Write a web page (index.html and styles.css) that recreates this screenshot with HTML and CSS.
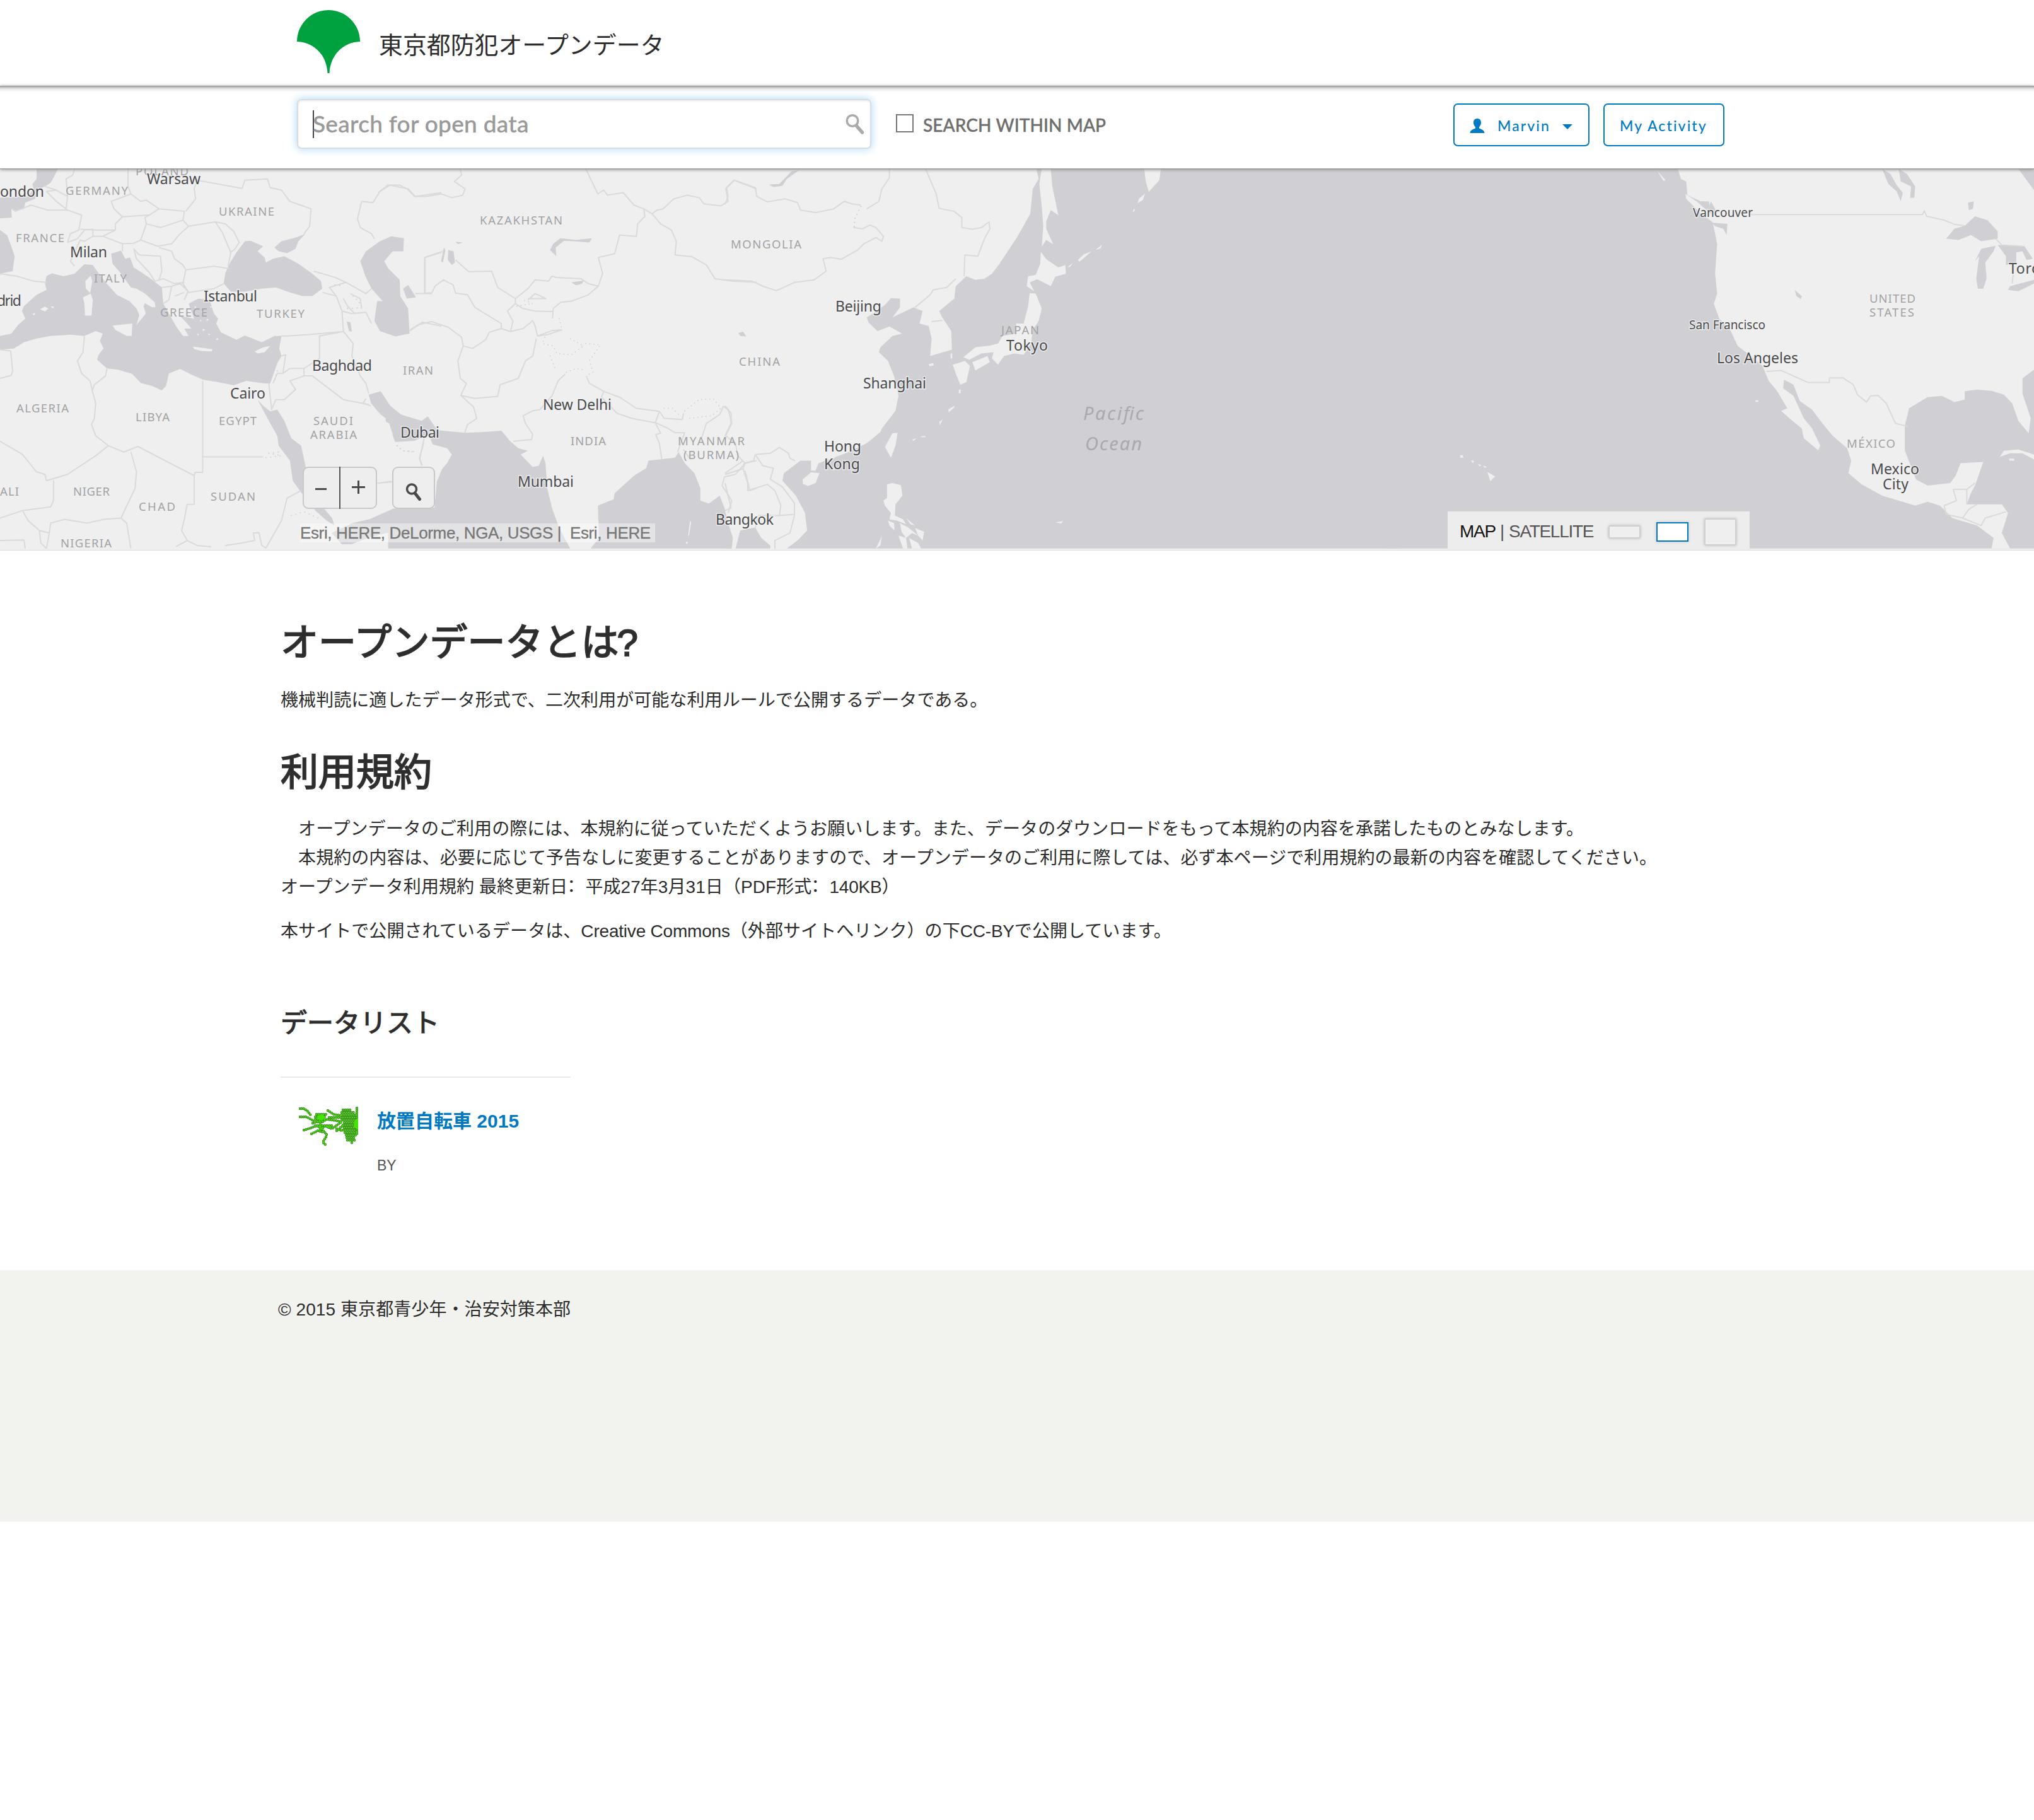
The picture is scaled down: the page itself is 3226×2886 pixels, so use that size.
FILE: index.html
```html
<!DOCTYPE html>
<html lang="ja">
<head>
<meta charset="utf-8">
<title>東京都防犯オープンデータ</title>
<link rel="stylesheet" href="styles.css">
</head>
<body>
<header class="brand">
  <svg class="brand-logo" viewBox="0 0 100 100"><path d="M0 50A50 50 0 0 1 100 50C72 51 53 72 51.500 100H48.500C47 72 28 51 0 50Z"/></svg>
  <span class="brand-name">東京都防犯オープンデータ</span>
</header>
<div class="toolbar">
  <div class="search">
    <span class="caret"></span><span class="placeholder">Search for open data</span>
    <svg class="search-icon" viewBox="0 0 30 34"><circle cx="11" cy="11.500" r="8.800"/><path class="handle" d="M17 19L26.500 30"/></svg>
  </div>
  <span class="checkbox"></span>
  <span class="within">SEARCH WITHIN MAP</span>
  <div class="actions">
    <a class="btn btn-user">
      <svg class="user-icon" viewBox="0 0 24 23"><path d="M12 0c4 0 6 2.800 6 6.200 0 3-1.300 5.600-3 7v2.300c3 1.500 8 2.200 8.500 7.500H.5C1 17.700 6 17 9 15.500v-2.300c-1.700-1.400-3-4-3-7C6 2.800 8 0 12 0z"/></svg>
      <span class="user-name">Marvin</span><span class="arrow"></span>
    </a>
    <a class="btn btn-activity">My Activity</a>
  </div>
</div>
<section class="map">
<svg class="map-canvas" viewBox="0 268 3226 602" preserveAspectRatio="none">
  <!-- Europe, North Africa, Middle East -->
  <g transform="translate(0 260) scale(.44643 .39541)">
    <g class="sea">
      <path d="M130 20L205 20 195 45 180 75 160 90 128 105 125 140 90 155 85 180 55 187 40 180 42 215 0 218V135L100 130 120 100 115 80 130 60Z"/>
      <path d="M0 265L25 285 40 330 52 370 45 430 0 440Z"/>
      <path d="M0 690L40 680 65 645 90 620 78 590 85 570 130 525 165 505 160 480 165 450 185 438 225 450 265 440 300 402 330 405 345 430 375 475 415 525 460 550 485 580 495 605 485 645 500 625 518 600 510 570 515 558 540 575 552 575 550 555 515 520 485 500 465 495 430 440 400 400 395 360 430 348 445 380 462 375 475 415 530 455 575 495 580 560 600 600 625 650 650 690 670 690 655 660 680 660 665 640 640 610 690 620 670 560 705 540 745 545 760 600 775 620 768 640 785 675 840 705 870 688 930 715 975 690 1000 690 992 740 1000 770 985 800 960 880 940 880 875 870 830 888 775 875 720 865 680 845 640 822 600 840 590 890 575 908 540 890 500 878 470 842 420 825 380 820 345 785 350 765 368 740 355 710 365 680 340 670 300 690 250 685 180 690 130 700 85 715 50 740 0 745Z"/>
      <path d="M815 400L840 355 870 310 890 308 935 330 915 350 940 375 945 395 970 380 1010 370 1060 400 1110 440 1140 470 1145 500 1110 530 1075 530 1030 515 980 495 930 500 870 512 820 512 795 480 800 440Z"/>
      <path d="M975 335L1000 310 1050 295 1085 280 1060 310 1050 340 1020 358 990 350Z"/>
      <path d="M1280 390L1300 350 1350 310 1390 290 1435 298 1433 350 1395 350 1365 390 1380 420 1420 465 1422 530 1450 580 1455 680 1405 692 1350 670 1330 630 1340 550 1360 550 1320 500 1298 450Z"/>
      <path d="M1432 500L1450 485 1478 535 1445 540Z"/>
      <path d="M915 945L935 970 960 992 985 985 1010 1030 1035 1100 1070 1130 1085 1210 1120 1340 1180 1420 1188 1450 1160 1430 1120 1390 1065 1310 1040 1270 1030 1190 990 1130 985 1090 960 1040Z"/>
      <path d="M1232 632L1245 635 1250 672 1240 670Z"/>
    </g>
    <g class="land">
      <path d="M322 448L328 470 320 518 305 500 303 470Z"/><path d="M295 535L322 520 330 545 325 608 302 608 300 560Z"/>
      <path d="M400 648L470 640 468 690 450 690 410 665Z"/><path d="M685 733L705 735 755 743 752 752 715 750 690 742Z"/>
      <path d="M905 752L935 735 960 730 940 755 915 760Z"/><path d="M142 582L160 572 172 580 160 592ZM180 570L192 572 188 580ZM115 600L125 598 122 608Z"/>
      <path d="M690 570l8 3-5 6zM715 590l10 4-8 5zM735 620l8 5-10 4zM720 660l9 5-8 6zM700 680l8 3-5 5zM765 705l10 -8 0 8zM745 570l8 2-4 6zM710 625l7 2-5 5zM740 680l8 3-7 4z"/>
    </g>
    <g class="line">
      <path d="M42 180L55 190 110 165 170 185 240 185 290 205 280 265 250 280 240 315"/><path d="M160 90L200 105 240 130 235 180M200 105L165 110 200 150 240 185M265 20L258 45 235 60 240 130"/>
      <path d="M455 20L455 90 465 120 395 150 405 180 435 212 410 240 410 265 340 265 285 262M465 120L500 150 520 145 565 180 530 205 435 212M565 180L655 190 650 225 570 255 520 240 515 215 530 205"/>
      <path d="M700 65L860 98 870 65 950 60 960 95 1000 105 1030 150 1105 180 1100 250 1080 280M700 65L690 100 695 140 660 190M650 225L670 250 765 232 790 275 820 355 835 340 850 315 830 270 800 240 765 232M520 240L500 305 560 330 610 320 640 280 670 250M820 355L810 410"/>
      <path d="M240 315L275 300 300 265 330 262 330 290 300 310 285 305 250 390 265 410M330 290L365 290 410 265M365 290L400 305 435 320 475 318 500 305M435 320L435 350"/>
      <path d="M475 340L495 365 570 370 575 430 565 465M475 340L485 380 530 435 550 470 580 460M565 335L610 350 620 380 650 405 660 425 760 410 815 420M660 425L650 480 670 515 760 500 795 480M580 460L620 480 655 475M575 495L610 490 640 480 668 510 655 545M610 490L600 545 580 560M655 515L620 530"/>
      <path d="M0 440L60 450 120 470 165 475M0 445V440"/>
      <path d="M300 690L295 755 275 790 290 840 320 870 328 910 340 960 335 1020 325 1045 340 1090 385 1130 340 1170 240 1245 165 1270 160 1245 130 1235 80 1165 0 1112M380 820L375 850 335 885 328 910M385 1130L440 1155 490 1133 690 1250 693 1237 720 1237V870M720 1175H935M690 1250V1365H665L655 1425 645 1470 665 1510 625 1535M465 1155L485 1235 480 1300 430 1420 450 1440 465 1542M190 1268V1350L180 1375 80 1390 0 1420M80 1390L100 1430 140 1470 175 1480 180 1440 230 1425 310 1440 370 1425 430 1420M140 1470L145 1520 165 1542M175 1480L165 1542M0 1510L85 1508 90 1542M665 1510L700 1530 750 1535M800 1530L860 1520 905 1510 900 1480 920 1478 930 1530 945 1540 1000 1430 1020 1340 1070 1310"/>
      <path d="M38 750L45 830 40 848 0 860M38 750L0 745M955 880L965 985 980 945 1010 945 1050 905 1030 870 1080 850 1110 850 1220 945 1310 965M970 880L985 840 1005 840 1030 820 1080 820 1135 780V690L1220 672M1000 770L1015 765 1005 840M1000 690L1020 690 1090 685 1220 672 1215 590 1195 530 1145 515M1080 820V850M1195 530L1170 495 1230 475 1300 520 1320 500M1115 430L1190 455 1230 475M1215 590L1250 600 1300 595 1320 640M1220 672L1255 720 1250 770 1280 850 1300 880 1310 920M1220 540L1235 570 1260 600M1245 520L1280 540 1285 580"/>
      <path d="M1330 300L1320 280 1280 255 1270 220 1285 150 1325 155 1350 110 1385 85 1450 100 1475 130 1568 115M1510 515V375L1568 355M1475 520H1535M1455 670L1500 635 1568 650"/>
      <path d="M1500 1210L1490 1180 1505 1120M1340 1280L1395 1275M1300 940L1290 960 1318 970"/>
    </g>
    <g class="dots"><path d="M945 1178L1000 1170 955 1160 990 1155M1190 485L1220 490M1235 580L1285 575M1255 530L1280 560M1035 1410L1080 1395 1130 1420M1410 1130L1430 1150 1485 1155M985 830L975 870"/></g>
  </g>
  <!-- Central and South Asia -->
  <g transform="translate(600 260) scale(.38265 .39541)">
    <g class="sea">
      <path d="M-40 925L10 912 50 970 95 1005 180 1030 205 1012 225 1040 245 1068 360 1078 440 1075 510 1070 545 1110 580 1140 620 1150 590 1165 640 1215 665 1210 683 1170 693 1200 700 1300 720 1380 750 1460 795 1542H41V1479L-30 1495-110 1525-151 1525-194 1480-109 1441-34 1424 62 1382 233 1378 243 1273 265 1222 285 1200 305 1165 285 1140 225 1125 210 1085 150 1110 70 1115 60 1090 50 1060 35 1060 30 1020 5 1000-30 960Z"/>
      <path d="M880 1542L915 1500 910 1370 975 1345 980 1320 1060 1250 1110 1220 1120 1190 1230 1178 1245 1155 1270 1200 1310 1240 1335 1300 1335 1350 1370 1362 1415 1330 1435 1380 1450 1440 1470 1500 1465 1542Z"/>
      <path d="M272 335L278 345 268 395 260 390ZM290 345L312 350 318 395 305 405 288 385ZM320 312L350 315 330 322Z"/>
      <path d="M712 345L725 320 755 298 820 305 885 298 875 315 810 310 770 308 735 335 738 370Z"/>
      <path d="M800 475L850 468 845 480 820 487Z"/><path d="M1492 678L1510 675 1525 690 1500 690Z"/>
    </g>
    <path class="land" d="M1292 1432L1297 1436 1288 1490 1284 1490ZM1276 1515h6v8h-6zM22 1030L45 1040 60 1085 45 1105 30 1085Z"/>
    <g class="line">
      <path d="M340 20L345 45 315 70 360 100 350 125 305 135 260 120 200 130 150 130 120 100 90 85 40 85 0 115M860 20L910 120 935 105 950 125 1015 115 1060 165 1100 180 1135 200 1155 185 1180 180 1225 140 1280 125 1330 135 1350 160 1420 168 1450 150 1440 100 1475 65 1568 100M1135 200L1170 240 1215 265 1235 310 1230 365 1300 372 1360 405 1395 460 1470 470 1568 475"/>
      <path d="M1100 180L1105 210 1075 240 1070 290 1000 285 980 360 912 375 930 440 912 490 870 480 840 460 740 455 720 450 705 470 650 465 620 500 568 540 495 495 470 430 375 432 320 385M268 350L192 375V517H222L235 490 270 465 310 485 320 518 370 525 400 575 510 640V660L548 672 600 660 640 628 650 650 660 690 700 685 760 665 720 668 660 690M912 490L870 525 800 550 755 555 725 580 722 620M722 592L650 590 600 580 568 560 568 540M568 560L535 590 558 630 548 672M510 660L460 675 445 705 390 740 352 730 345 695 290 655 220 632 165 645 132 665M620 540L695 540 650 520 620 545"/>
      <path d="M352 730L330 790 340 860 365 880 342 928 400 940 495 932 505 885 580 860 610 790 640 770 655 700M342 928L395 975 408 1020 370 1045 358 1078M560 1112L635 1105 640 1085 610 1040 600 1010 640 990 670 985 720 930 745 870 775 842M862 850L875 880 935 912 1000 935 1070 980 1165 992 1148 1038 1050 1020 990 1000 925 935 935 912M1165 992L1185 1020 1260 1025 1265 1000M1148 1038L1170 1080 1150 1085 1165 1120 1175 1185M1150 1038L1200 1060 1230 1078 1270 1078 1240 1155M1265 1145L1290 1180M1340 1100L1360 1040 1415 1005 1430 972 1450 985 1465 1040 1440 1090 1480 1120 1490 1170 1520 1200 1568 1190M1520 1200L1480 1245 1435 1255 1425 1290 1465 1350 1450 1400M1520 1230L1540 1310 1568 1300M180 1210L172 1180 190 1100M0 1280L55 1272"/>
    </g>
    <g class="dots"><path d="M750 620L760 660M690 695L680 720 725 730 740 760 800 765 850 730 785 695M712 770L725 800 735 825M860 720L920 725 875 790 890 835 860 850M780 835L820 820 850 825M1185 980L1220 980 1250 1010M1270 990L1330 945 1390 942 1420 980 1380 1010 1290 1020M80 1130L100 1150 155 1155M575 570L640 560 600 545"/></g>
  </g>
  <!-- East Asia and the western Pacific -->
  <g transform="translate(1150 260) scale(.47832 .39541)">
    <g class="sea">
      <path d="M1032 20L1040 60 1020 100 1012 200 970 290 910 400 885 440 860 460 830 465 800 450 765 490 760 540 710 590 720 615 750 670 752 745 680 770 685 700 675 650 645 640 655 590 625 575 590 595 555 615 580 575 580 540 550 538 530 565 490 600 470 615 475 635 505 670 545 652 587 680 555 690 515 735 510 755 540 790 560 850 570 900 575 930 565 990 520 1060 515 1075 470 1120 400 1160 310 1200 300 1230 285 1230 285 1190 250 1190 195 1240 190 1270 235 1330 265 1400 272 1470 240 1510 205 1542H2240V20Z"/>
      <path d="M35 1542L50 1470 100 1458 120 1500 150 1530V1542ZM0 1460L20 1500 18 1542H0Z"/>
      <path d="M145 82L180 80 220 30 245 25 205 60 190 88 160 92Z"/><path d="M45 678L60 673 70 692 52 690Z"/>
    </g>
    <g class="land">
      <path d="M1050 20H1080L1085 90 1105 205 1080 185 1065 230 1065 260 1088 322 1065 305 1050 332 1055 250 1050 170 1042 80Z"/>
      <path d="M1390 20H1445L1440 65 1405 112 1395 70Z"/><path d="M1393 118L1385 145 1368 157 1372 140ZM1355 180l5 2-6 12-2-4zM1170 385L1190 362 1215 350 1195 372 1175 392ZM1228 345L1250 324 1245 338ZM1135 415L1152 398 1145 412Z"/>
      <path d="M1047 352L1065 382 1105 415 1128 405 1130 440 1095 452 1080 490 1035 462 1010 475 1025 510 1000 490 1005 450 1030 445 1045 400Z"/>
      <path d="M1010 518L1030 520 1050 580 1040 630 1020 665 1015 720 990 765 960 760 925 770 905 805 885 780 890 755 850 760 810 785 790 775 830 735 880 728 905 720 920 690 965 680 965 640 990 640 1005 570Z"/>
      <path d="M755 805L795 790 812 810 800 875 780 885 765 840ZM820 795L870 770 878 795 830 828Z"/>
      <path d="M675 803L690 798 692 808 678 811ZM748 760h5v20h-5zM775 905h6v14h-6zM740 985l20-15v6l-18 20zM710 1035l12-12-10 25zM620 1105l15-5-10 10zM650 1092h15v4h-15z"/>
      <path d="M555 1080L572 1078 565 1130 550 1178 530 1135Z"/><path d="M257 1265L285 1237 313 1240 300 1280 275 1292 258 1283Z"/>
      <path d="M537 1285L555 1280 583 1288 588 1330 565 1365 563 1410 590 1425 600 1445 570 1430 545 1425 550 1400 530 1370 525 1350 537 1340Z"/>
      <path d="M540 1430L560 1440 562 1470 545 1450ZM600 1420L630 1450 615 1445ZM580 1440L610 1460 640 1490 620 1480 600 1500 585 1475ZM500 1542L520 1492 515 1530ZM575 1490L600 1500 605 1542H590ZM630 1460L660 1475 655 1510 640 1490ZM610 1500L640 1520 650 1542H620ZM1095 1438L1120 1432 1115 1442Z"/>
    </g>
    <g class="line">
      <path d="M0 160L10 130 5 95 30 65 100 95 105 130 140 152 200 140 240 155 250 185 300 195 360 180 395 150 420 160 450 165M545 20V55L520 100 510 150 470 180M665 20L700 120 710 178 760 190 785 215 785 255 820 262 850 255 875 232 878 260 860 300 838 370 795 365 793 450M0 465L90 470 125 490 170 508 230 475 295 465 335 430 325 380 350 375 385 382 440 345 460 320 500 295 520 310 525 290 500 255 480 245 455 260 425 255M765 460L735 495 690 505 680 525 630 575M685 632L720 627"/>
      <path d="M100 1165L150 1160 180 1137 210 1160 215 1180 232 1190M100 1165L125 1210 160 1220 150 1265 190 1295 230 1360 230 1410 215 1480 165 1510 165 1542M0 1245L60 1222 75 1280 75 1310 140 1285 165 1310 185 1370 180 1410 230 1405M60 1222L65 1200 95 1190 100 1165M0 1280L10 1330 20 1380 0 1390M180 1410L110 1410 100 1460M0 970L20 1000 20 1040 0 1090M60 1190L0 1240"/>
    </g>
    <path class="dots" d="M450 170L430 220 428 255M1350 190L1310 260 1285 300"/>
  </g>
  <!-- North and Central America -->
  <g transform="translate(2200 260) scale(.65434 .39541)">
    <path class="sea" d="M-5 20H1568V1542H-5Z"/>
    <g class="land">
      <path d="M705 20L712 60 725 70 728 125 760 150 780 150 790 240 800 320 795 440 800 520 792 560 805 620 830 660 850 730 870 755 910 810 925 870 945 910 970 980 955 990 975 1020 1005 1060 1010 1100 1045 1148 1050 1130 1030 1060 1010 1020 985 930 960 900 962 865 985 885 1000 950 1030 985 1055 1040 1080 1090 1115 1140 1125 1190 1118 1240 1150 1285 1200 1330 1280 1370 1310 1355 1340 1370 1370 1420 1430 1450 1470 1500 1465 1542H1510L1490 1480 1505 1400 1490 1365 1405 1365 1415 1320 1425 1290 1445 1195 1390 1200 1378 1250 1365 1280 1310 1290 1282 1265 1255 1150 1255 1050 1265 980 1310 935 1345 930 1375 955 1400 945 1400 912 1430 905 1465 910 1495 925 1515 960 1530 1030 1555 1080 1560 1020 1540 920 1540 860 1568 825V105L1530 20Z"/>
      <path d="M655 28L675 65 670 68ZM723 120L750 150 785 200 790 235 755 190 725 140Z"/>
      <path d="M1485 1175L1495 1150 1530 1145 1568 1165V1185L1540 1160 1510 1160ZM1508 1182h12v8h-12z"/>
      <path d="M177 1168h6l2 10h-8zM203 1188l8 4-3 8zM220 1203l8 4-3 6zM232 1210l10 4-5 5zM243 1235L262 1253 250 1272ZM893 948h7v6h-7z"/>
    </g>
    <g class="sea">
      <path d="M1200 20L1220 40 1235 85 1250 115 1245 150 1235 110 1215 80ZM1240 20L1260 40 1280 90 1278 135 1268 135 1270 90 1245 70ZM1408 155L1422 150 1420 180 1410 185ZM785 150L800 195 795 205 780 175ZM787 235L825 240 823 285 815 260 795 250Z"/>
      <path d="M1355 300L1375 260 1400 248 1425 210 1455 225 1480 270 1480 300 1440 310 1415 285 1385 305Z"/>
      <path d="M1425 390L1440 340 1475 328 1470 350 1450 395 1453 460 1445 500 1432 500 1428 460 1435 370ZM1480 325L1545 330 1565 380 1550 385 1540 350 1525 355 1525 400 1500 405 1500 370ZM1505 505L1510 490 1568 465V480L1530 510Z"/>
      <path d="M988 505L1005 530 1003 542 992 530Z"/>
    </g>
    <g class="line">
      <path d="M880 203H1298L1302 188 1308 210 1350 225 1375 242 1400 248M920 832L955 828 1020 876H1072V858H1105L1130 885 1140 925 1162 955 1172 930 1190 928 1210 960 1232 1040 1262 1053M1350 1370L1380 1350 1372 1305H1405V1365M1405 1305L1425 1280M1350 1370L1355 1405 1395 1420 1410 1385 1430 1365M1395 1420L1425 1440 1440 1450 1450 1420 1500 1395M1475 300L1490 325 1540 330M1520 410L1515 480"/>
    </g>
  </g>
  <g class="country">
    <text x="215" y="278" textLength="84">POLAND</text><text x="104" y="309" textLength="99">GERMANY</text><text x="25" y="384" textLength="77">FRANCE</text><text x="347" y="342" textLength="88">UKRAINE</text><text x="149" y="448" textLength="52">ITALY</text><text x="254" y="502" textLength="75">GREECE</text><text x="407" y="504" textLength="76">TURKEY</text><text x="639" y="594" textLength="48">IRAN</text><text x="26" y="654" textLength="83">ALGERIA</text><text x="215" y="668" textLength="54">LIBYA</text><text x="347" y="674" textLength="60">EGYPT</text><text x="497" y="674" textLength="63">SAUDI</text><text x="492" y="696" textLength="74">ARABIA</text><text x="0" y="786" textLength="30">ALI</text><text x="116" y="786" textLength="58">NIGER</text><text x="220" y="810" textLength="58">CHAD</text><text x="334" y="794" textLength="71">SUDAN</text><text x="96" y="868" textLength="81">NIGERIA</text>
    <text x="761" y="356" textLength="131">KAZAKHSTAN</text><text x="905" y="706" textLength="56">INDIA</text><text x="1075" y="706" textLength="106">MYANMAR</text><text x="1084" y="728" textLength="88">(BURMA)</text><text x="1159" y="394" textLength="112">MONGOLIA</text><text x="1172" y="580" textLength="65">CHINA</text><text x="1588" y="530" textLength="60">JAPAN</text>
    <text x="2965" y="480" textLength="73">UNITED</text><text x="2965" y="502" textLength="71">STATES</text><text x="2929" y="710" textLength="77">MÉXICO</text>
  </g>
  <g class="city">
    <text x="233" y="292" textLength="85">Warsaw</text><text x="0" y="312" textLength="70">ondon</text><text x="111" y="408" textLength="59">Milan</text><text x="-5" y="485" textLength="39">drid</text><text x="323" y="478" textLength="85">Istanbul</text><text x="495" y="588" textLength="95">Baghdad</text><text x="365" y="632" textLength="56">Cairo</text><text x="635" y="694" textLength="62">Dubai</text><text x="861" y="650" textLength="109">New Delhi</text><text x="821" y="772" textLength="89">Mumbai</text><text x="1135" y="832" textLength="92">Bangkok</text><text x="1325" y="494" textLength="73">Beijing</text><text x="1369" y="616" textLength="100">Shanghai</text><text x="1307" y="716" textLength="59">Hong</text><text x="1307" y="744" textLength="57">Kong</text><text x="1596" y="556" textLength="66">Tokyo</text><text x="2723" y="576" textLength="129">Los Angeles</text><text x="2967" y="752" textLength="77">Mexico</text><text x="2986" y="776" textLength="41">City</text><text x="3186" y="434" textLength="50">Toro</text>
  </g>
  <g class="city city-small"><text x="2685" y="344" textLength="95">Vancouver</text><text x="2679" y="522" textLength="121">San Francisco</text></g>
  <g class="ocean"><text x="1718" y="666" textLength="96">Pacific</text><text x="1721" y="714" textLength="90">Ocean</text></g>
</svg>
<div class="zoom-tools">
  <div class="zoom"><span class="zoom-btn minus"></span><span class="zoom-btn plus"></span></div>
  <div class="locate"><svg viewBox="0 0 26 30"><circle cx="10" cy="9.500" r="7.500"/><path class="handle" d="M15.500 16.500L22.500 25.500"/></svg></div>
</div>
<div class="attribution">Esri, HERE, DeLorme, NGA, USGS |&nbsp; Esri, HERE</div>
<div class="basemap"><span class="on">MAP</span><span class="bar">|</span><span class="off">SATELLITE</span><i class="size small"></i><i class="size medium"></i><i class="size large"></i></div>
</section>
<main class="content">
  <h1>オープンデータとは<span class="mark">?</span></h1>
  <p class="about">機械判読に適したデータ形式で、二次利用が可能な利用ルールで公開するデータである。</p>
  <h1 class="terms-title">利用規約</h1>
  <p class="terms">　オープンデータのご利用の際には、本規約に従っていただくようお願いします。また、データのダウンロードをもって本規約の内容を承諾したものとみなします。<br>　本規約の内容は、必要に応じて予告なしに変更することがありますので、オープンデータのご利用に際しては、必ず本ページで利用規約の最新の内容を確認してください。<br>オープンデータ利用規約 最終更新日<span class="colon">：</span>平成27年3月31日（PDF形式<span class="colon">：</span><span class="latin">140KB</span>）</p>
  <p class="license">本サイトで公開されているデータは、<span class="latin">Creative Commons</span>（外部サイトへリンク）の下<span class="latin">CC-BY</span>で公開しています。</p>
  <h2>データリスト</h2>
  <article class="dataset">
    <svg class="thumb" viewBox="0 0 94 62">
      <g class="rim"><path d="M0 3L8 3 14 7 20 15M0 16H12L25 23M46 6L55 12 68 14M48 17H68M8 37L18 34 28 30 36 34M20 43L30 38 38 40M44 44L36 35 42 30 52 35 62 28 68 24M38 23L45 20 60 22 68 24M60 38L66 33 70 30M43 48L38 56 43 61M60 35L68 38M22 26L34 22 34 42"/>
      <path d="M28 12H43M26 16H43M26 20H43M30 24H40M26 30H52M46 32H52M70 5H84M68 9H88M68 13H92M70 17H92M68 21H92M72 25H92M70 29H92M72 33H92M70 37H92M73 41H92M75 45H90M76 49H90M77 53H91M84 57H86M92 2V46"/></g>
      <g class="fill"><path d="M0 3L8 3 14 7 20 15M0 16H12L25 23M46 6L55 12 68 14M48 17H68M8 37L18 34 28 30 36 34M20 43L30 38 38 40M44 44L36 35 42 30 52 35 62 28 68 24M38 23L45 20 60 22 68 24M60 38L66 33 70 30M43 48L38 56 43 61M60 35L68 38M22 26L34 22 34 42"/>
      <path d="M28 12H43M26 16H43M26 20H43M30 24H40M26 30H52M46 32H52M70 5H84M68 9H88M68 13H92M70 17H92M68 21H92M72 25H92M70 29H92M72 33H92M70 37H92M73 41H92M75 45H90M76 49H90M77 53H91M84 57H86M92 2V46"/></g>
      <path class="bright" d="M30 14L38 12 42 18 36 22 29 19ZM88 22L94 18V36L87 32Z"/>
    </svg>
    <div class="dataset-text"><a class="dataset-name">放置自転車 2015</a><span class="by">BY</span></div>
  </article>
</main>
<footer class="footer">© 2015 東京都青少年・治安対策本部</footer>
</body>
</html>
```

FILE: styles.css
```css
* { box-sizing: border-box; }
body { margin: 0; background: #fff; color: #2c2c2c; font-family: "Liberation Sans", "Noto Sans CJK JP", sans-serif; font-size: 28px; }

.brand { display: flex; align-items: flex-start; height: 136px; padding: 16px 0 0 471px; background: #fff; }
.brand-logo { width: 100px; height: 100px; margin-right: 30px; fill: #00a23f; }
.brand-name { margin-top: 28px; font-size: 37.900px; line-height: 56px; white-space: nowrap; }

.toolbar { position: relative; z-index: 1; display: flex; align-items: flex-start; height: 132px; padding: 20px 491px 0 471px; background: linear-gradient(#aaa, #e8e8e8 4px, #fff 9px); box-shadow: 0 1px 5px #888; border-top: 1px solid #999; border-bottom: 1px solid #999; font-family: Lato, sans-serif; }
.search { display: flex; align-items: center; width: 911px; height: 79px; padding: 0 9px 0 23px; background: #fff; border: 2px solid #dcdcdf; border-radius: 7px; box-shadow: 0 0 13px 1px #b5dcfa, inset 0 2px 3px #eee; }
.caret { width: 2px; height: 44px; background: #444; }
.placeholder { margin: -2px auto 0 -2px; color: #999; font-size: 37px; letter-spacing: .3px; font-weight: 500; line-height: 50px; -webkit-text-stroke: .3px #999; }
.search-icon { width: 30px; height: 34px; fill: none; stroke: #aaa; stroke-width: 3.500; }
.handle { stroke-width: 5.500; stroke-linecap: round; }
.checkbox { width: 28px; height: 29px; margin: 24px 0 0 39px; border: 2px solid #777; }
.within { margin: 21px 0 0 15px; font-size: 28px; line-height: 40px; color: #6e6e6e; letter-spacing: .1px; font-weight: 500; -webkit-text-stroke: .4px #6e6e6e; }
.actions { display: flex; gap: 22px; margin: 7px 0 0 auto; }
.btn { display: flex; align-items: center; height: 68px; border: 2.500px solid #007ac2; border-radius: 7px; color: #007ac2; font-size: 23px; font-weight: 500; letter-spacing: 2.100px; }
.btn-user { width: 216px; padding: 2px 0 0 24px; }
.btn-activity { width: 192px; padding: 2px 0 0 24px; white-space: nowrap; }
.user-icon { width: 24px; height: 23px; margin-right: 20px; fill: #007ac2; }
.user-name { width: 84px; }
.arrow { margin: 4px 0 0 19px; border: 8px solid transparent; border-top: 8px solid #007ac2; border-bottom: 0; }

.map { position: relative; height: 605px; background: #efefef; border-bottom: 1px solid #ddd; }
.map-canvas { display: block; width: 3226px; height: 602px; background: #efeff0; overflow: hidden; }
.sea { fill: #d0cfd4; }
.land { fill: #efeff0; }
.line, .dots { fill: none; stroke: #dadadb; stroke-width: 2; stroke-linejoin: round; }
.line path { vector-effect: non-scaling-stroke; }
.dots { stroke: #d2d2d4; stroke-width: 5; stroke-linecap: round; stroke-dasharray: 0 17; }
.country { font: 18.500px "Noto Sans", sans-serif; fill: #a2a2a4; }
.city { font: 23px "Noto Sans", sans-serif; fill: #4a4a4d; stroke: #f2f2f2; stroke-width: 3; stroke-opacity: .75; paint-order: stroke; }
.city-small { font-size: 19px; }
.ocean { font: italic 29px "Noto Sans", sans-serif; fill: #a9a9ae; }
.zoom-tools { position: absolute; left: 480px; top: 472px; display: flex; gap: 24px; }
.zoom, .locate { display: flex; height: 67px; background: #eeeeef; border: 2px solid #c8c8ca; border-radius: 9px; }
.zoom { width: 118px; }
.zoom-btn { flex: 1; position: relative; }
.minus { border-right: 2px solid #555; margin: -2px 0; }
.zoom-btn::before, .plus::after { content: ""; position: absolute; background: #4a4a4a; }
.minus::before { left: 18px; top: 34px; width: 18px; height: 3px; }
.plus::before { left: 18px; top: 29px; width: 21px; height: 3px; }
.plus::after { left: 27px; top: 20px; width: 3px; height: 21px; }
.locate { width: 68px; padding: 24px 0 0 19px; }
.locate svg { width: 26px; height: 30px; fill: none; stroke: #4a4a4a; stroke-width: 3.500; }
.locate .handle { stroke-width: 5; }
.attribution { position: absolute; left: 476px; top: 562px; width: 563px; height: 30px; background: rgba(255, 255, 255, .4); color: #777; font-size: 26px; letter-spacing: -.36px; line-height: 30px; white-space: nowrap; -webkit-text-stroke: .3px #777; }
.basemap { position: absolute; left: 2296px; top: 543px; display: flex; align-items: center; width: 479px; height: 61px; padding: 3px 0 0 19px; background: #ededed; color: #555; letter-spacing: -1.300px; }
.on { color: #111; width: 56px; }
.bar { width: 22px; text-align: center; }
.off { width: 136px; margin-right: 22px; }
.size { width: 51px; background: #efefef; border: 2px solid #d0d0d0; border-radius: 3px; box-shadow: 0 0 4px #bbb; }
.size + .size { margin-left: 25px; }
.small { height: 21px; }
.medium { height: 31px; background: #fff; border-color: #007ac2; border-radius: 0; }
.large { height: 43px; }

.content { height: 1141px; padding: 107px 0 0 445px; }
h1, h2, p { margin: 0; white-space: nowrap; }
h1, h2 { font-weight: normal; -webkit-text-stroke: 1.900px #323232; }
h1 { font-size: 60px; line-height: 80px; }
.mark { margin-left: -3px; }
p { line-height: 46px; letter-spacing: .07px; }
.about { margin-top: 28px; }
.terms-title { margin-top: 52px; }
.terms { margin-top: 26px; }
.license { margin-top: 24px; }
.latin { letter-spacing: -.2px; }
.colon { position: relative; left: -8px; }
h2 { margin-top: 93px; font-size: 42px; line-height: 60px; -webkit-text-stroke-width: 1.200px; }
.dataset { display: flex; width: 460px; margin-top: 54px; padding: 46px 0 0 29px; border-top: 2px solid #e9e9e9; }
.thumb { width: 94px; height: 62px; margin-right: 30px; }
.rim, .fill { fill: none; stroke-linecap: round; stroke-dasharray: 0 3.700; }
.rim { stroke: #3f8528; stroke-width: 4.400; }
.fill { stroke: #43dc08; stroke-width: 2.700; }
.bright { fill: #42e600; }
.dataset-text { display: flex; flex-direction: column; white-space: nowrap; }
.dataset-name { color: #0079c1; font-size: 30px; font-weight: bold; line-height: 46px; }
.by { margin-top: 32px; font-size: 23px; line-height: 30px; color: #555; }
.footer { height: 399px; padding: 40px 0 0 441px; background: #f2f3ee; line-height: 46px; letter-spacing: .08px; }
```
